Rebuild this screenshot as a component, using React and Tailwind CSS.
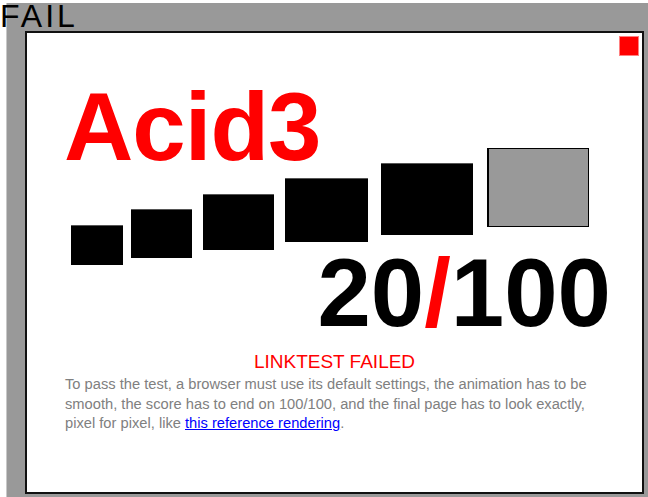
import React from 'react';

const steps = [
  { w: 'w-[52px] h-[40px] mb-0', color: 'bg-black' },
  { w: 'w-[61px] h-[49px] mb-[7px] ml-[8px]', color: 'bg-black' },
  { w: 'w-[71px] h-[56px] mb-[15px] ml-[11px]', color: 'bg-black' },
  { w: 'w-[83px] h-[64px] mb-[23px] ml-[11px]', color: 'bg-black' },
  { w: 'w-[92px] h-[72px] mb-[30px] ml-[13px]', color: 'bg-black' },
];

export default function App() {
  return (
    <div className="relative w-[648px] h-[497px] overflow-hidden bg-white font-['Liberation_Sans',Arial,sans-serif]">
      {/* page frame */}
      <div className="ml-[6px] mt-[3px] w-[700px] border-l border-[#c8c8c8] bg-[#999] pl-[18px] pt-[28px] pb-[20px]">
        <div className="relative w-[619px] h-[463px] border-2 border-[#111] bg-white">
          <div className="absolute top-[3px] right-[3px] w-[20px] h-[20px] border border-[#ff8080] bg-[#f00]" />

          <h1 className="pl-[37px] pt-[46px] text-[96px] leading-none font-bold tracking-[-1px] text-[#f00]">Acid3</h1>

          <div className="-mt-[27px] ml-[44px] flex h-[117px] items-end">
            {steps.map((s, i) => (
              <div key={i} className={`${s.w} ${s.color} border-t border-[#555]`} />
            ))}
            <div className="w-[102px] h-[79px] mb-[38px] ml-[14px] border border-l-2 border-black bg-[#999]" />
          </div>

          <div className="-mt-[20px] pr-[31px] text-right text-[96px] leading-none font-bold text-black">
            20<span className="text-[#f00]">/</span>100
          </div>

          <p className="mt-[11px] text-center text-[19px] leading-[19px] text-[#f00]">LINKTEST FAILED</p>

          <p className="mt-[4px] pl-[38px] text-[14.7px] leading-[19.5px] text-[#808080]">
            To pass the test, a browser must use its default settings, the animation has to be
            <br />
            smooth, the score has to end on 100/100, and the final page has to look exactly,
            <br />
            pixel for pixel, like <a href="#" className="text-[#00f] underline">this reference rendering</a>.
          </p>
        </div>
      </div>

      <div className="absolute left-0 top-0 text-[32px] leading-none tracking-[3px] text-black">FAIL</div>
    </div>
  );
}
